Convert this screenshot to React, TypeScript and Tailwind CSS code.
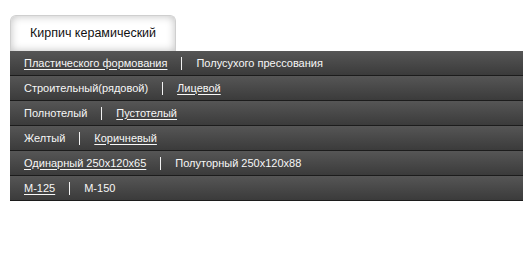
import React from "react";

interface Item {
  label: string;
  active?: boolean;
}

const rows: Item[][] = [
  [{ label: "Пластического формования", active: true }, { label: "Полусухого прессования" }],
  [{ label: "Строительный(рядовой)" }, { label: "Лицевой", active: true }],
  [{ label: "Полнотелый" }, { label: "Пустотелый", active: true }],
  [{ label: "Желтый" }, { label: "Коричневый", active: true }],
  [{ label: "Одинарный 250x120x65", active: true }, { label: "Полуторный 250x120x88" }],
  [{ label: "М-125", active: true }, { label: "М-150" }],
];

const FilterRow = ({ items }: { items: Item[] }) => (
  <div className="flex items-center h-[25px] pl-[14px] bg-gradient-to-b from-[#565656] to-[#3b3b3b] border-b border-[#1c1c1c]">
    {items.map((item, i) => (
      <React.Fragment key={item.label}>
        {i > 0 && <span className="mx-[14px] w-px h-[13px] bg-[#f2f2f2]" />}
        <span
          className={
            item.active
              ? "text-[#f7f7f7] underline underline-offset-2 cursor-pointer"
              : "text-[#f7f7f7]"
          }
        >
          {item.label}
        </span>
      </React.Fragment>
    ))}
  </div>
);

export default function App() {
  return (
    <div className="w-[523px] h-[273px] bg-white pt-[15px] pl-[10px] font-['Liberation_Sans',sans-serif]">
      <div className="flex">
        <div className="w-[166px] h-[36px] flex items-center justify-center rounded-t-[6px] bg-white border border-b-0 border-[#cfcfcf] shadow-[inset_0_0_8px_rgba(0,0,0,0.25)] text-[12.5px] text-[#111]">
          Кирпич керамический
        </div>
      </div>
      <div className="text-[11px] leading-none">
        {rows.map((items, i) => (
          <FilterRow key={i} items={items} />
        ))}
      </div>
    </div>
  );
}
